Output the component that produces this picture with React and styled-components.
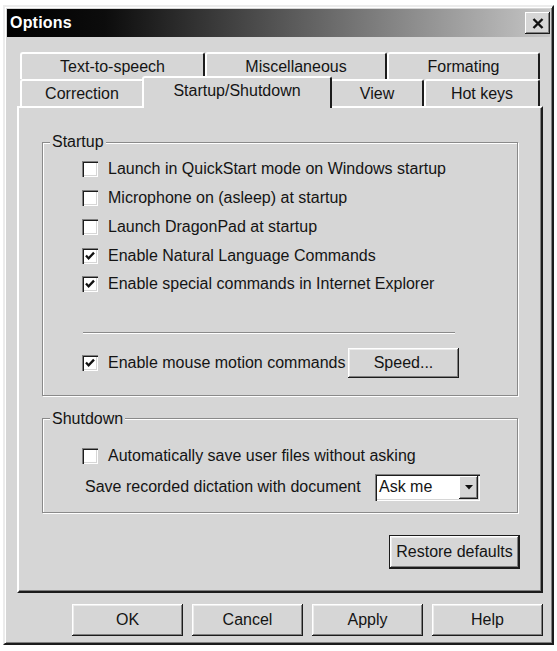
import styled, { createGlobalStyle } from "styled-components";

const face = "#d6d6d6";
const shadow = "#808080";
const dark = "#1c1c1c";

const GlobalStyle = createGlobalStyle`
  html, body {
    margin: 0;
    padding: 0;
    background: #fff;
  }
  body {
    font-family: "Liberation Sans", Arial, sans-serif;
    font-size: 16px;
    color: #141414;
  }
`;

const Window = styled.div`
  box-sizing: border-box;
  width: 551px;
  margin: 5px 0 0 3px;
  padding: 2px;
  background: ${face};
  border: 2px solid;
  border-color: #ececec ${dark} ${dark} #ececec;
  box-shadow: inset 1px 1px #fff, inset -1px -1px ${shadow};
`;

const TitleBar = styled.div`
  height: 28px;
  display: flex;
  align-items: center;
  justify-content: space-between;
  padding-left: 3px;
  background: linear-gradient(90deg, #000 0%, #0c0c0c 18%, #c6c6c6 100%);
`;

const Title = styled.span`
  color: #fff;
  font-weight: bold;
  font-size: 16px;
  letter-spacing: 0.2px;
`;

const CloseButton = styled.div`
  box-sizing: border-box;
  width: 25px;
  height: 22px;
  display: flex;
  align-items: center;
  justify-content: center;
  background: ${face};
  box-shadow: inset -1px -1px ${dark}, inset 1px 1px #fff,
    inset -2px -2px ${shadow};
`;

const Body = styled.div`
  padding: 15px 7px 5px 10px;
`;

const TabStrip = styled.div`
  margin: 0 3px;
  display: flex;
  flex-direction: column;
`;

const TabRow = styled.div`
  display: flex;
`;

const Tab = styled.div`
  box-sizing: border-box;
  position: relative;
  width: ${(p) => (p.$active ? p.$w + 4 : p.$w)}px;
  height: ${(p) => (p.$active ? 32 : 27)}px;
  margin: ${(p) => (p.$active ? "-3px -2px -2px" : "0")};
  z-index: ${(p) => (p.$active ? 2 : 1)};
  display: flex;
  align-items: center;
  justify-content: center;
  padding-bottom: ${(p) => (p.$active ? 4 : 0)}px;
  background: ${face};
  border-top: 2px solid #fff;
  border-left: 2px solid #fff;
  border-right: 2px solid ${dark};
  border-radius: 3px 3px 0 0;
  white-space: nowrap;
`;

const Panel = styled.div`
  position: relative;
  z-index: 1;
  border: 2px solid;
  border-color: #fff ${dark} ${dark} #fff;
  box-shadow: inset -1px -1px ${shadow};
  padding: 25px 23px 22px 23px;
`;

const Group = styled.fieldset`
  margin: ${(p) => p.$top || 0}px 0 0;
  padding: ${(p) => p.$pad};
  border: 1px solid #8a8a8a;
  box-shadow: inset 1px 1px #fff, 1px 1px #fff;
  min-width: 0;
`;

const Legend = styled.legend`
  margin-left: 7px;
  padding: 0 2px;
  line-height: 18px;
  background: ${face};
`;

const GroupBody = styled.div`
  padding-left: 39px;
`;

const CheckRow = styled.div`
  height: ${(p) => p.$h}px;
  display: flex;
  align-items: center;
  gap: 10px;
  white-space: nowrap;
`;

const Box = styled.span`
  box-sizing: border-box;
  flex: none;
  width: 16px;
  height: 16px;
  display: flex;
  align-items: center;
  justify-content: center;
  background: #fff;
  box-shadow: inset 1px 1px ${shadow}, inset 2px 2px ${dark},
    inset -1px -1px #fff, inset -2px -2px ${face};
`;

const Separator = styled.div`
  width: 372px;
  height: 0;
  margin: 33px 0 14px 1px;
  border-top: 1px solid #8a8a8a;
  border-bottom: 1px solid #fff;
`;

const MouseRow = styled.div`
  display: grid;
  grid-template-columns: 266px 111px;
  align-items: center;
  height: 30px;
`;

const Button = styled.button`
  box-sizing: border-box;
  width: ${(p) => p.$w}px;
  height: ${(p) => p.$h}px;
  padding: 0;
  font: inherit;
  color: inherit;
  background: ${face};
  border: ${(p) => (p.$default ? `1px solid ${dark}` : "none")};
  box-shadow: inset -1px -1px ${dark}, inset 1px 1px #fff,
    inset -2px -2px ${shadow}, inset 2px 2px #ececec;
  white-space: nowrap;
`;

const SaveRow = styled.div`
  display: grid;
  grid-template-columns: 293px 105px;
  align-items: center;
  height: 27px;
  margin-top: 4px;
`;

const SaveLabel = styled.span`
  padding-left: 3px;
  white-space: nowrap;
`;

const Combo = styled.div`
  box-sizing: border-box;
  height: 27px;
  display: flex;
  align-items: center;
  justify-content: space-between;
  padding: 2px;
  background: #fff;
  box-shadow: inset 1px 1px ${shadow}, inset 2px 2px ${dark},
    inset -1px -1px #fff, inset -2px -2px ${face};
`;

const ComboText = styled.span`
  padding-left: 2px;
`;

const ComboArrow = styled.span`
  width: 19px;
  height: 23px;
  display: flex;
  align-items: center;
  justify-content: center;
  background: ${face};
  box-shadow: inset -1px -1px ${dark}, inset 1px 1px #fff,
    inset -2px -2px ${shadow};
`;

const RestoreRow = styled.div`
  display: flex;
  justify-content: flex-end;
  margin: 22px -2px 0 0;
`;

const ButtonRow = styled.div`
  display: flex;
  justify-content: flex-end;
  gap: 9px;
  margin-top: 11px;
`;

const backTabs = [
  { label: "Text-to-speech", w: 185 },
  { label: "Miscellaneous", w: 182 },
  { label: "Formating", w: 153 },
];

const frontTabs = [
  { label: "Correction", w: 124 },
  { label: "Startup/Shutdown", w: 186, active: true },
  { label: "View", w: 94 },
  { label: "Hot keys", w: 116 },
];

const startupItems = [
  { label: "Launch in QuickStart mode on Windows startup", checked: false },
  { label: "Microphone on (asleep) at startup", checked: false },
  { label: "Launch DragonPad at startup", checked: false },
  { label: "Enable Natural Language Commands", checked: true },
  { label: "Enable special commands in Internet Explorer", checked: true },
];

function Checkbox({ checked }) {
  return (
    <Box>
      {checked && (
        <svg width="16" height="16" viewBox="0 0 16 16">
          <path
            d="M4 7.5 L6.6 10.4 L12 4.6"
            fill="none"
            stroke="#111"
            strokeWidth="2.3"
          />
        </svg>
      )}
    </Box>
  );
}

function Check({ label, checked, h = 28.75 }) {
  return (
    <CheckRow $h={h}>
      <Checkbox checked={checked} />
      <span>{label}</span>
    </CheckRow>
  );
}

export default function App() {
  return (
    <>
      <GlobalStyle />
      <Window>
        <TitleBar>
          <Title>Options</Title>
          <CloseButton>
            <svg width="12" height="11" viewBox="0 0 12 11">
              <path
                d="M1.5 1 L10.5 10 M10.5 1 L1.5 10"
                stroke="#111"
                strokeWidth="2.4"
              />
            </svg>
          </CloseButton>
        </TitleBar>

        <Body>
          <TabStrip>
            <TabRow>
              {backTabs.map((t) => (
                <Tab key={t.label} $w={t.w}>
                  {t.label}
                </Tab>
              ))}
            </TabRow>
            <TabRow>
              {frontTabs.map((t) => (
                <Tab key={t.label} $w={t.w} $active={t.active}>
                  {t.label}
                </Tab>
              ))}
            </TabRow>
          </TabStrip>

          <Panel>
            <Group $pad="4px 0 17px">
              <Legend>Startup</Legend>
              <GroupBody>
                {startupItems.map((item) => (
                  <Check key={item.label} {...item} />
                ))}
                <Separator />
                <MouseRow>
                  <Check label="Enable mouse motion commands" checked h={30} />
                  <Button $w={111} $h={30}>
                    Speed...
                  </Button>
                </MouseRow>
              </GroupBody>
            </Group>

            <Group $top={14} $pad="14px 0 11px">
              <Legend>Shutdown</Legend>
              <GroupBody>
                <Check
                  label="Automatically save user files without asking"
                  h={28}
                />
                <SaveRow>
                  <SaveLabel>Save recorded dictation with document</SaveLabel>
                  <Combo>
                    <ComboText>Ask me</ComboText>
                    <ComboArrow>
                      <svg width="8" height="5" viewBox="0 0 8 5">
                        <polygon points="0,0 8,0 4,4.5" fill="#111" />
                      </svg>
                    </ComboArrow>
                  </Combo>
                </SaveRow>
              </GroupBody>
            </Group>

            <RestoreRow>
              <Button $w={131} $h={34} $default>
                Restore defaults
              </Button>
            </RestoreRow>
          </Panel>

          <ButtonRow>
            <Button $w={111} $h={32}>
              OK
            </Button>
            <Button $w={111} $h={32}>
              Cancel
            </Button>
            <Button $w={111} $h={32}>
              Apply
            </Button>
            <Button $w={111} $h={32}>
              Help
            </Button>
          </ButtonRow>
        </Body>
      </Window>
    </>
  );
}
